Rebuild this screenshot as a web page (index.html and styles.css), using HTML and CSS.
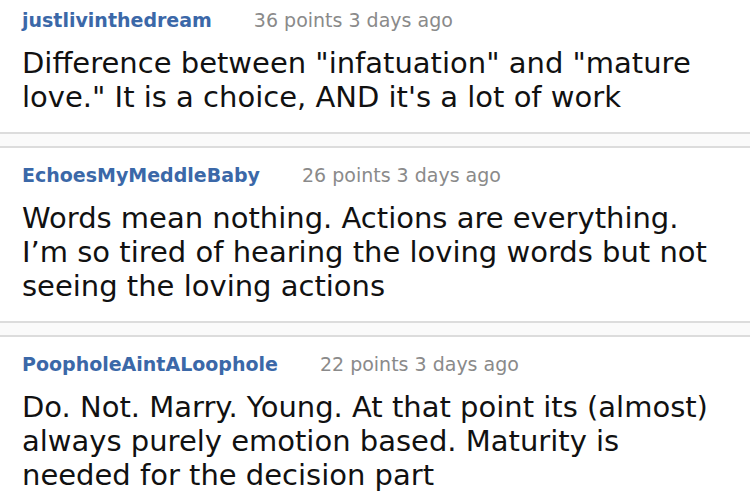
FILE: index.html
```html
<!DOCTYPE html>
<html>
<head>
<meta charset="utf-8">
<link rel="stylesheet" href="styles.css">
</head>
<body>
<div class="thread">
  <div class="comment first">
    <div class="meta"><span class="user">justlivinthedream</span><span class="info">36 points 3 days ago</span></div>
    <div class="body">Difference between "infatuation" and "mature love." It is a choice, AND it's a lot of work</div>
  </div>
  <div class="sep"></div>
  <div class="comment">
    <div class="meta"><span class="user">EchoesMyMeddleBaby</span><span class="info">26 points 3 days ago</span></div>
    <div class="body">Words mean nothing. Actions are everything. I’m so tired of hearing the loving words but not seeing the loving actions</div>
  </div>
  <div class="sep"></div>
  <div class="comment">
    <div class="meta"><span class="user">PoopholeAintALoophole</span><span class="info">22 points 3 days ago</span></div>
    <div class="body">Do. Not. Marry. Young. At that point its (almost) always purely emotion based. Maturity is needed for the decision part</div>
  </div>
</div>
</body>
</html>
```

FILE: styles.css
```css
html, body {
  margin: 0;
  padding: 0;
  background: #ffffff;
}
body {
  width: 750px;
  height: 500px;
  overflow: hidden;
  font-family: "DejaVu Sans", Verdana, sans-serif;
}
.comment {
  padding: 16px 20px 18px 22px;
}
.comment.first {
  padding-top: 9px;
}
.meta {
  font-size: 19px;
  line-height: 23px;
  display: flex;
  gap: 42px;
}
.user {
  font-weight: bold;
  color: #3b68a8;
}
.info {
  color: #8a8a8a;
}
.body {
  margin-top: 14px;
  font-size: 29px;
  line-height: 34px;
  color: #111111;
}
.sep {
  height: 12px;
  border-top: 2px solid #dcdcdc;
  border-bottom: 2px solid #dcdcdc;
  background: #fafafa;
}
```
